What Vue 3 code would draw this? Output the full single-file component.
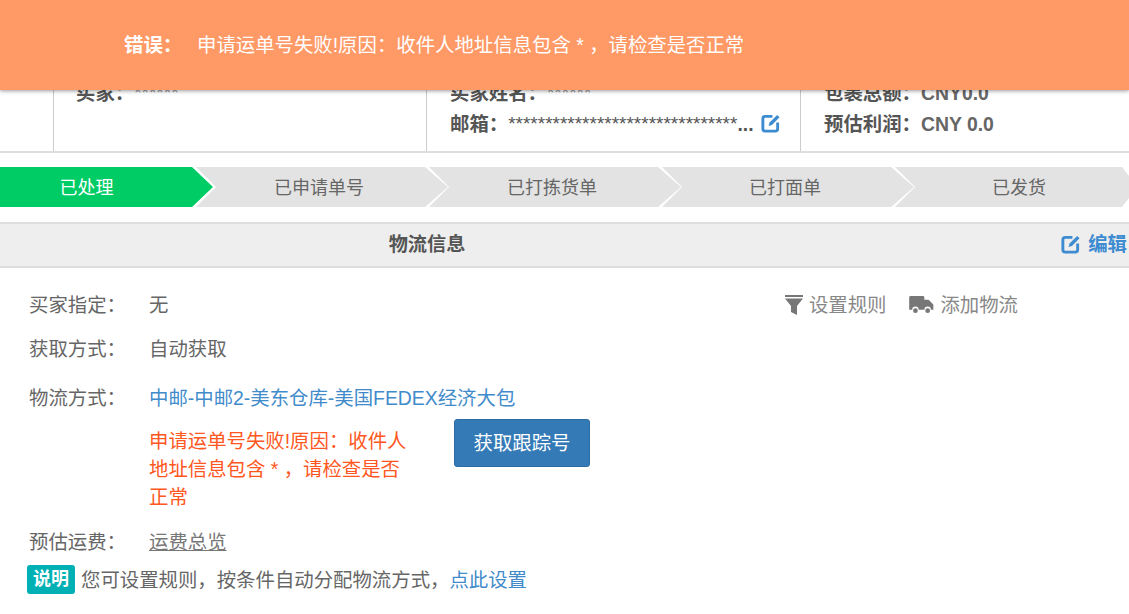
<script setup>
const steps = ['已处理', '已申请单号', '已打拣货单', '已打面单', '已发货']
const editPath = 'M13 3.500H5.500A2.500 2.500 0 0 0 3 6v10.500A2.500 2.500 0 0 0 5.500 19H16a2.500 2.500 0 0 0 2.500-2.500V10'
</script>

<template>
  <div class="page">
    <div class="alert">
      <strong class="alert-title">错误&#xFF1A;</strong>
      <span>申请运单号失败!原因&#xFF1A;收件人地址信息包含 * &#xFF0C;请检查是否正常</span>
    </div>

    <section class="info">
      <div class="cell cell-side"></div>
      <div class="cell cell-buyer">
        <div class="line"><b>买家&#xFF1A;</b><span class="stars">******</span></div>
      </div>
      <div class="cell cell-contact">
        <div class="line"><b>买家姓名&#xFF1A;</b><span class="stars">******</span></div>
        <div class="line">
          <b>邮箱&#xFF1A;</b>
          <span class="stars mail">*******************************</span>
          <span class="dots">...</span>
          <svg class="edit-icon" viewBox="0 0 22 22" fill="none" stroke="#3d8bd0" stroke-width="3">
            <path :d="editPath" />
            <path d="M9 13.500l1-3.500 8-8 2.500 2.500-8 8z" fill="#3d8bd0" stroke="none" />
          </svg>
        </div>
      </div>
      <div class="cell cell-money">
        <div class="line"><b>包裹总额&#xFF1A;</b><span class="num">CNY0.0</span></div>
        <div class="line"><b>预估利润&#xFF1A;</b><span class="num">CNY 0.0</span></div>
      </div>
    </section>

    <ol class="steps">
      <li v-for="(s, i) in steps" :key="s" class="step" :class="{ first: i === 0, last: i === 4 }">{{ s }}</li>
    </ol>

    <header class="panel-head">
      <h2>物流信息</h2>
      <a class="head-edit">
        <svg class="edit-icon" viewBox="0 0 22 22" fill="none" stroke="#3d8bd0" stroke-width="3">
          <path :d="editPath" />
          <path d="M9 13.500l1-3.500 8-8 2.500 2.500-8 8z" fill="#3d8bd0" stroke="none" />
        </svg>
        编辑
      </a>
    </header>

    <div class="body">
      <div class="row row-a">
        <span class="label">买家指定&#xFF1A;</span>
        <span class="value grow">无</span>
        <div class="actions">
          <span class="act">
            <svg class="funnel" viewBox="0 0 18 20">
              <path d="M0 0h18v2H0z" fill="#777" />
              <path d="M0 3.500h18l-6 7.500v9l-6-3v-6z" fill="#777" />
            </svg>
            设置规则
          </span>
          <span class="act">
            <svg class="truck" viewBox="0 0 26 19">
              <path d="M1.500 0h13A1.500 1.500 0 0 1 16 1.500V4h4.500L25.500 9v5.500h-2.600a3.400 3.400 0 0 0-6.800 0H10a3.400 3.400 0 0 0-6.800 0H0V1.500A1.500 1.500 0 0 1 1.500 0z" fill="#777" />
              <circle cx="6.600" cy="15.500" r="2.500" fill="#777" />
              <circle cx="19.500" cy="15.500" r="2.500" fill="#777" />
            </svg>
            添加物流
          </span>
        </div>
      </div>
      <div class="row row-b">
        <span class="label">获取方式&#xFF1A;</span>
        <span class="value">自动获取</span>
      </div>
      <div class="row row-c">
        <span class="label">物流方式&#xFF1A;</span>
        <a class="link">中邮-中邮2-美东仓库-美国FEDEX经济大包</a>
      </div>
      <div class="row row-d">
        <span class="label"></span>
        <p class="error">申请运单号失败!原因&#xFF1A;收件人地址信息包含 * &#xFF0C;请检查是否正常</p>
        <button class="track">获取跟踪号</button>
      </div>
      <div class="row row-e">
        <span class="label">预估运费&#xFF1A;</span>
        <a class="overview">运费总览</a>
      </div>
      <div class="note">
        <span class="badge">说明</span>
        <span class="note-text">您可设置规则&#xFF0C;按条件自动分配物流方式&#xFF0C;</span><a class="link">点此设置</a>
      </div>
    </div>
  </div>
</template>

<style>
html, body { margin: 0; overflow: hidden; background: #fff; }
</style>

<style scoped>
.page {
  position: relative;
  width: 1129px;
  height: 614px;
  overflow: hidden;
  font: 19.4px/28px "Liberation Sans", "Noto Sans CJK SC", sans-serif;
  color: #555;
}
.alert {
  position: absolute;
  inset: 0 0 auto 0;
  height: 90px;
  padding-left: 124px;
  display: flex;
  align-items: center;
  box-sizing: border-box;
  background: #ff9966;
  color: #fff;
  box-shadow: 0 1px 4px rgba(0, 0, 0, .4);
  z-index: 2;
}
.alert-title { width: 73px; font-weight: 700; }
.info {
  display: grid;
  grid-template-columns: 53px 373px 374px 1fr;
  height: 153px;
  border-bottom: 2px solid #ddd;
  box-sizing: border-box;
}
.cell { display: flex; flex-direction: column; justify-content: flex-end; padding: 0 0 12px 23px; border-left: 1px solid #ccc; }
.cell-side { border-left: 0; }
.cell-buyer { justify-content: flex-start; padding: 77px 0 0 22px; }
.line { display: flex; height: 31px; align-items: center; white-space: nowrap; }
.line b { font-weight: 700; color: #555; }
.stars { font-size: 19px; color: #999; }
.mail { color: #555; }
.dots { font-weight: 700; color: #555; }
.num { font-weight: 700; color: #666; }
.edit-icon { width: 21px; height: 21px; margin-left: 6px; }
.steps {
  list-style: none;
  display: flex;
  margin: 14px 0 0;
  padding: 0;
  height: 40px;
  font-size: 18px;
}
.step {
  flex: 0 0 252px;
  margin-right: -19px;
  padding: 2px 6px 0 0;
  box-sizing: border-box;
  background: #e3e3e3;
  color: #666;
  display: flex;
  align-items: center;
  justify-content: center;
  clip-path: polygon(0 0, calc(100% - 23px) 0, 100% 50%, calc(100% - 23px) 100%, 0 100%, 20px 50%);
}
.step.first {
  flex-basis: 213px;
  margin-right: -17px;
  padding: 2px 40px 0 0;
  background: #00cc66;
  color: #fff;
  clip-path: polygon(0 0, calc(100% - 21px) 0, 100% 50%, calc(100% - 21px) 100%, 0 100%);
}
.step.last {
  flex: 1 1 auto;
  margin-right: 0;
  padding: 2px 0 0 14px;
  clip-path: polygon(0 0, calc(100% - 7px) 0, 100% 9px, 100% 31px, calc(100% - 7px) 100%, 0 100%, 20px 50%);
}
.panel-head {
  position: relative;
  margin-top: 15px;
  height: 46px;
  box-sizing: border-box;
  background: #eee;
  border-top: 2px solid #ddd;
  border-bottom: 2px solid #ddd;
  display: flex;
  align-items: center;
  justify-content: center;
  padding: 0 275px 0 0;
}
.panel-head h2 { margin: 0; font-size: 19.2px; font-weight: 700; color: #555; }
.head-edit {
  position: absolute;
  right: 2px;
  top: 6px;
  display: flex;
  align-items: center;
  gap: 7px;
  color: #3d8bd0;
  font-weight: 700;
}
.head-edit .edit-icon { margin: 0; }
.body { padding: 23px 0 0 29px; }
.row { display: flex; align-items: flex-start; }
.row-a { margin-bottom: 16px; }
.row-b { margin-bottom: 21px; }
.row-c { margin-bottom: 15px; }
.row-d { margin-bottom: 17px; }
.row-e { margin-bottom: 9px; }
.label { flex: 0 0 120px; color: #666; }
.grow { flex: 1; }
.value { color: #666; }
.actions { display: flex; gap: 23px; margin-right: 111px; color: #888; }
.act { display: flex; align-items: center; gap: 6px; }
.funnel { width: 18px; height: 20px; }
.truck { width: 25px; height: 18px; }
.link { color: #428bca; }
.error { width: 262px; margin: 0; color: #ff5722; }
.track {
  margin: -8px 0 0 43px;
  width: 136px;
  height: 48px;
  padding: 0;
  border: 1px solid #2e6da4;
  border-radius: 3px;
  background: #337ab7;
  color: #fff;
  font: inherit;
}
.overview { color: #777; text-decoration: underline; }
.note { display: flex; align-items: center; margin-left: -2px; height: 29px; }
.badge {
  width: 48px;
  height: 29px;
  margin-right: 6px;
  border-radius: 3px;
  background: #00b0b5;
  color: #fff;
  font-size: 18px;
  font-weight: 700;
  line-height: 29px;
  text-align: center;
}
.note-text { color: #666; }
</style>
